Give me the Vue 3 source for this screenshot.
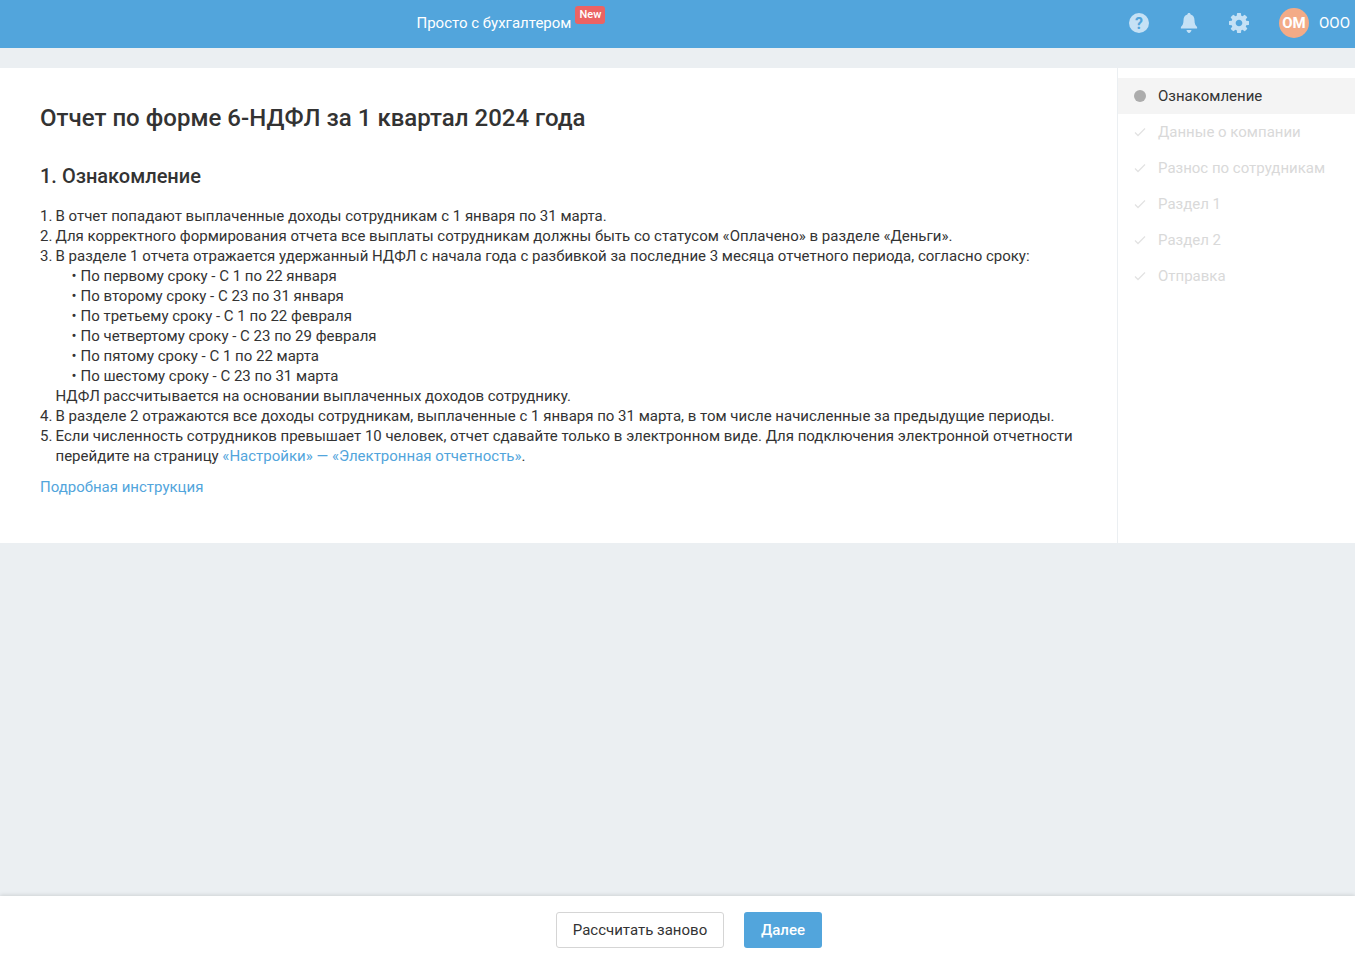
<script setup>
const steps = ['Данные о компании', 'Разнос по сотрудникам', 'Раздел 1', 'Раздел 2', 'Отправка']
const terms = [
  'По первому сроку - С 1 по 22 января',
  'По второму сроку - С 23 по 31 января',
  'По третьему сроку - С 1 по 22 февраля',
  'По четвертому сроку - С 23 по 29 февраля',
  'По пятому сроку - С 1 по 22 марта',
  'По шестому сроку - С 23 по 31 марта'
]
</script>

<template>
  <div class="page">
    <header class="topbar">
      <div class="brand">
        <span class="brand-text">Просто с бухгалтером</span>
        <span class="badge">New</span>
      </div>
      <div class="tools">
        <svg class="tool" width="22" height="22" viewBox="0 0 22 22">
          <circle cx="11" cy="11" r="10" fill="#c5e1f5" />
          <text x="11" y="16.500" text-anchor="middle" class="q">?</text>
        </svg>
        <svg class="tool" width="22" height="22" viewBox="0 0 22 22">
          <path d="M11 1c1 0 1.600.7 1.600 1.600 2.600.7 3.900 3 3.900 5.600 0 3.600 1 5.300 2.600 6.800v1.500H2.900V15c1.600-1.500 2.600-3.200 2.600-6.800 0-2.600 1.300-4.900 3.900-5.600C9.400 1.700 10 1 11 1z" fill="#c5e1f5" />
          <path d="M8.500 18h5c-.3 1.600-1.300 3-2.500 3s-2.200-1.400-2.500-3z" fill="#c5e1f5" />
        </svg>
        <svg class="tool" width="22" height="22" viewBox="51 51 1690 1690">
          <path fill="#c5e1f5" d="M1152 896q0-106-75-181t-181-75-181 75-75 181 75 181 181 75 181-75 75-181zm512-109v222q0 12-8 23t-20 13l-185 28q-19 54-39 91 35 50 107 138 10 12 10 25t-9 23q-27 37-99 108t-94 71q-12 0-26-9l-138-108q-44 23-91 38-16 136-29 186-7 28-36 28h-222q-14 0-24.500-8.500t-11.500-21.500l-28-184q-49-16-90-37l-141 107q-10 9-25 9-14 0-25-11-126-114-165-168-7-10-7-23 0-12 8-23 15-21 51-66.500t54-70.500q-27-50-41-99l-183-27q-13-2-21-12.500t-8-23.500v-222q0-12 8-23t19-13l186-28q14-46 39-92-40-57-107-138-10-12-10-24 0-10 9-23 26-36 98.500-107.500t94.500-71.500q13 0 26 10l138 107q44-23 91-38 16-136 29-186 7-28 36-28h222q14 0 24.500 8.500t11.500 21.500l28 184q49 16 90 37l142-107q9-9 24-9 13 0 25 10 129 119 165 170 7 8 7 22 0 12-8 23-15 21-51 66.500t-54 70.500q26 50 41 98l183 28q13 2 21 12.500t8 23.500z" />
        </svg>
        <div class="user">
          <span class="avatar">ОМ</span>
          <span class="org">ООО</span>
        </div>
      </div>
    </header>

    <div class="content">
      <main class="article">
        <h1>Отчет по форме 6-НДФЛ за 1 квартал 2024 года</h1>
        <h2>1. Ознакомление</h2>
        <ol class="list">
          <li><span class="num">1.</span>В отчет попадают выплаченные доходы сотрудникам с 1 января по 31 марта.</li>
          <li><span class="num">2.</span>Для корректного формирования отчета все выплаты сотрудникам должны быть со статусом «Оплачено» в разделе «Деньги».</li>
          <li>
            <span class="num">3.</span>В разделе 1 отчета отражается удержанный НДФЛ с начала года с разбивкой за последние 3 месяца отчетного периода, согласно сроку:
            <ul class="terms">
              <li v-for="t in terms" :key="t"><span class="dot">•</span>{{ t }}</li>
            </ul>
            НДФЛ рассчитывается на основании выплаченных доходов сотруднику.
          </li>
          <li><span class="num">4.</span>В разделе 2 отражаются все доходы сотрудникам, выплаченные с 1 января по 31 марта, в том числе начисленные за предыдущие периоды.</li>
          <li><span class="num">5.</span>Если численность сотрудников превышает 10 человек, отчет сдавайте только в электронном виде. Для подключения электронной отчетности<br />перейдите на страницу <a href="#">«Настройки» — «Электронная отчетность»</a>.</li>
        </ol>
        <a class="guide" href="#">Подробная инструкция</a>
      </main>
      <aside class="steps">
        <div class="step active">
          <span class="mark"><span class="bullet"></span></span>
          <span>Ознакомление</span>
        </div>
        <div v-for="s in steps" :key="s" class="step">
          <span class="mark">
            <svg width="12" height="10" viewBox="0 0 12 10"><path d="M1 5.500l3 3L11 1.500" fill="none" stroke="#e3e3e3" stroke-width="1.300" /></svg>
          </span>
          <span>{{ s }}</span>
        </div>
      </aside>
    </div>

    <footer class="actions">
      <button class="btn ghost" type="button">Рассчитать заново</button>
      <button class="btn primary" type="button">Далее</button>
    </footer>
  </div>
</template>

<style>
html, body { margin: 0; background: #ebeff2; }
</style>

<style scoped>
.page {
  height: 958px;
  display: flex;
  flex-direction: column;
  background: #ebeff2;
  font-family: Roboto, "Liberation Sans", sans-serif;
  font-size: 15px;
  line-height: 20px;
  color: #333;
  overflow: hidden;
}
.topbar {
  height: 48px;
  flex: none;
  background: #52a5dc;
  display: flex;
  align-items: center;
  justify-content: space-between;
  box-sizing: border-box;
  padding-left: 416.500px;
  padding-right: 5px;
}
.brand { display: flex; align-items: flex-start; align-self: flex-start; padding-top: 13px; }
.brand-text { color: #fff; font-size: 15px; line-height: 20px; }
.badge {
  margin-left: 4px;
  margin-top: -7px;
  height: 18px;
  width: 30px;
  background: #eb6363;
  color: #fff;
  font-size: 11px;
  font-weight: 500;
  line-height: 17px;
  text-align: center;
  border-radius: 3px;
}
.tools { display: flex; align-items: center; margin-bottom: 2px; }
.tool { margin-right: 28px; display: block; }
.q { font: 700 16px Roboto, sans-serif; fill: #52a5dc; }
.user { display: flex; align-items: center; margin-left: 1px; }
.avatar {
  width: 30px;
  height: 30px;
  border-radius: 50%;
  background: #f3ab87;
  color: #fff;
  font-size: 15px;
  font-weight: 700;
  line-height: 30px;
  text-align: center;
}
.org { color: #fff; font-size: 15px; margin-left: 10px; }
.content {
  margin-top: 20px;
  height: 475px;
  flex: none;
  display: flex;
  background: #fff;
}
.article {
  flex: 1;
  min-width: 0;
  box-sizing: border-box;
  padding: 34px 40px 0;
  border-right: 1px solid #ebeff2;
}
h1 { margin: 0; font-size: 24px; line-height: 32px; font-weight: 500; color: #333; letter-spacing: .02px; }
h2 { margin: 28px 0 0; font-size: 20px; line-height: 28px; font-weight: 500; color: #333; }
.list { list-style: none; margin: 16px 0 0; padding: 0; }
.list > li { padding-left: 15.500px; position: relative; }
.num { position: absolute; left: 0; }
.terms { list-style: none; margin: 0; padding: 0 0 0 16px; }
.terms li { white-space: nowrap; }
.dot { display: inline-block; width: 9px; }
a { color: #52a5dc; text-decoration: none; }
.guide { display: inline-block; margin-top: 11px; }
.steps {
  width: 237px;
  flex: none;
  padding-top: 10px;
  color: #d9d9d9;
}
.step {
  height: 36px;
  display: flex;
  align-items: center;
  padding-left: 16px;
}
.step.active { background: #f4f4f4; color: #333; }
.mark { width: 24px; display: flex; align-items: center; }
.bullet { width: 12px; height: 12px; border-radius: 50%; background: #acacac; }
.actions {
  margin-top: auto;
  height: 62px;
  flex: none;
  box-sizing: border-box;
  background: #fff;
  box-shadow: 0 -1px 4px rgba(0, 0, 0, .12);
  display: flex;
  justify-content: center;
  gap: 20px;
  padding-top: 16px;
  padding-left: 23px;
}
.btn {
  height: 36px;
  box-sizing: border-box;
  border-radius: 3px;
  font-family: inherit;
  font-size: 15px;
  line-height: 20px;
  padding: 0;
}
.ghost { width: 168px; background: #fff; border: 1px solid #d5d5d5; color: #333; }
.primary { width: 78px; background: #52a5dc; border: 0; color: #fff; font-weight: 500; }
</style>
